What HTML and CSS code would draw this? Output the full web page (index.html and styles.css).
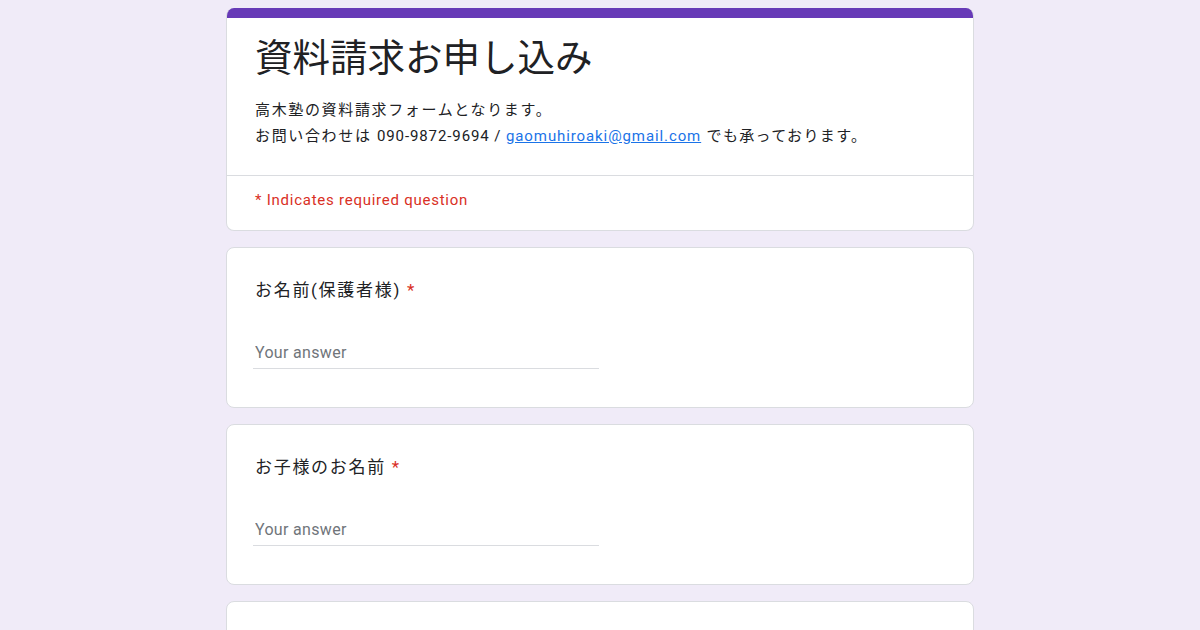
FILE: index.html
```html
<!DOCTYPE html>
<html lang="ja">
<head>
  <meta charset="utf-8">
  <title>資料請求お申し込み</title>
  <link rel="stylesheet" href="styles.css">
</head>
<body>
  <div class="form-wrap">
    <!-- ヘッダー -->
    <div class="card header-card">
      <div class="top-bar"></div>
      <div class="header-body">
        <h1 class="form-title">資料請求お申し込み</h1>
        <div class="form-desc">
          高木塾の資料請求フォームとなります。<br>
          お問い合わせは <span class="latin">090-9872-9694 / </span><a class="latin" href="mailto:gaomuhiroaki@gmail.com">gaomuhiroaki@gmail.com</a> <span class="tail">でも承っております。</span>
        </div>
      </div>
      <div class="required-note">* Indicates required question</div>
    </div>

    <!-- 質問 -->
    <div class="card question">
      <div class="q-title">お名前(保護者様) <span class="req">*</span></div>
      <div class="answer"><input type="text" placeholder="Your answer"></div>
    </div>

    <div class="card question">
      <div class="q-title">お子様のお名前 <span class="req">*</span></div>
      <div class="answer"><input type="text" placeholder="Your answer"></div>
    </div>

    <div class="card question">
      <div class="q-title">学年 <span class="req">*</span></div>
      <div class="answer"><input type="text" placeholder="Your answer"></div>
    </div>
  </div>
</body>
</html>
```

FILE: styles.css
```css
body {
  margin: 0;
  background-color: #f0ebf8;
  font-family: Roboto, "Noto Sans CJK JP", sans-serif;
  color: #202124;
}
.form-wrap {
  width: 748px;
  margin: 0 auto;
  padding-top: 8px;
  display: flex;
  flex-direction: column;
  gap: 16px;
}
.card {
  background-color: #ffffff;
  border: 1px solid #dadce0;
  border-radius: 8px;
  box-sizing: border-box;
}
.header-card {
  border-top: none;
  overflow: hidden;
}
.top-bar {
  height: 10px;
  background-color: #673ab7;
  margin: 0 -1px;
}
.header-body {
  padding: 16px 28px 26px;
  border-bottom: 1px solid #dadce0;
}
.form-title {
  margin: 0;
  font-size: 37.5px;
  font-weight: 400;
  line-height: 48px;
  letter-spacing: 0;
}
.form-desc {
  margin-top: 15px;
  font-size: 15px;
  line-height: 26px;
  letter-spacing: 0.11em;
}
.form-desc .latin {
  letter-spacing: 0.06em;
}
.form-desc .tail {
  letter-spacing: 0.09em;
}
.form-desc a {
  color: #1a73e8;
}
.required-note {
  padding: 14px 28px 20px;
  font-size: 15px;
  line-height: 20px;
  color: #d93025;
  letter-spacing: 0.05em;
}
.question {
  padding: 30px 28px 38px;
}
.q-title {
  font-size: 17px;
  line-height: 24px;
  letter-spacing: 0.1em;
}
.req {
  color: #d93025;
}
.answer {
  margin-top: 39px;
  width: 346px;
  margin-left: -2px;
}
.answer input {
  width: 100%;
  box-sizing: border-box;
  border: none;
  border-bottom: 1px solid #dadce0;
  padding: 0 0 3px 2px;
  font-family: Roboto, sans-serif;
  font-size: 16px;
  line-height: 24px;
  letter-spacing: 0.02em;
  outline: none;
}
.answer input::placeholder {
  color: #70757a;
}
```
